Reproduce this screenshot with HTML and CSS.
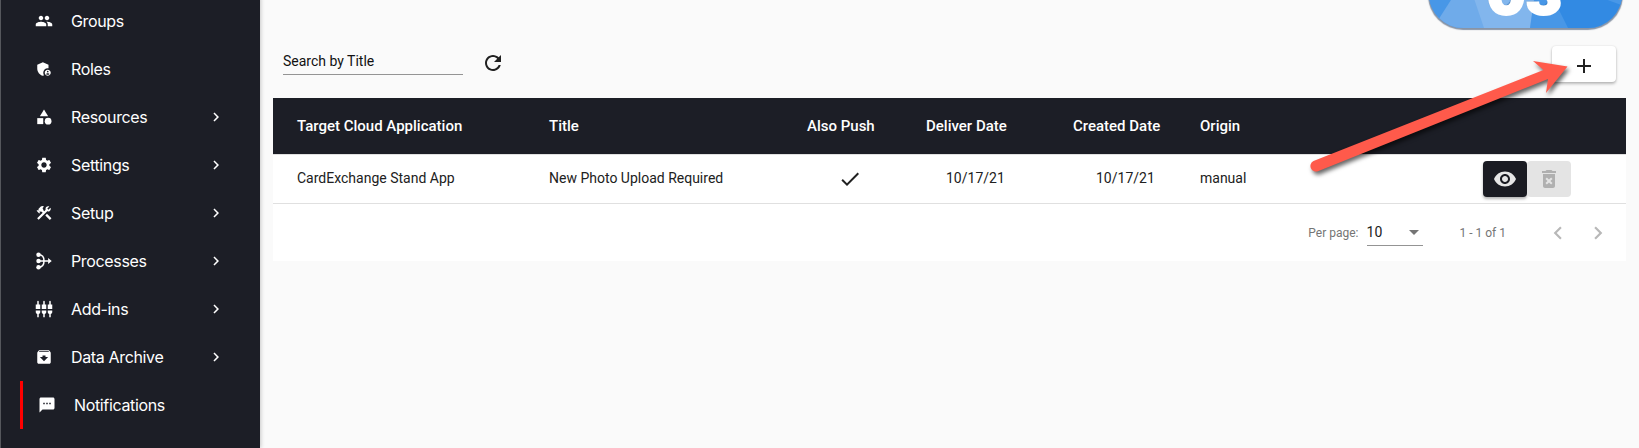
FILE: index.html
```
<!DOCTYPE html>
<html lang="en">

<head>
    <meta charset="UTF-8">
    <meta name="viewport" content="width=device-width, initial-scale=1.0">
    <title>Notifications</title>
    <link rel="stylesheet" href="styles.css">
</head>

<body>
    <div class="app">
        <nav class="sidebar">
            <a class="item">
                <svg class="icon" viewBox="0 0 24 24"><path d="M16 11c1.66 0 2.99-1.34 2.99-3S17.66 5 16 5c-1.66 0-3 1.34-3 3s1.34 3 3 3zm-8 0c1.66 0 2.99-1.34 2.99-3S9.66 5 8 5C6.34 5 5 6.34 5 8s1.34 3 3 3zm0 2c-2.33 0-7 1.17-7 3.5V19h14v-2.5c0-2.33-4.67-3.5-7-3.5zm8 0c-.29 0-.62.02-.97.05 1.16.84 1.97 1.97 1.97 3.45V19h6v-2.5c0-2.33-4.67-3.5-7-3.5z"/></svg>
                <span class="label">Groups</span>
            </a>
            <a class="item">
                <svg class="icon" viewBox="0 0 24 24"><path d="M17 11c.34 0 .67.04 1 .09V6.27L10.5 3 3 6.27v4.91c0 4.54 3.2 8.79 7.5 9.82.55-.13 1.08-.32 1.6-.55-.69-.98-1.1-2.17-1.1-3.45 0-3.31 2.69-6 6-6z"/><path d="M17 13c-2.21 0-4 1.79-4 4s1.79 4 4 4 4-1.79 4-4-1.79-4-4-4zm0 1.38c.62 0 1.12.51 1.12 1.12s-.51 1.12-1.12 1.12-1.12-.51-1.12-1.12.5-1.12 1.12-1.12zm0 5.37c-.93 0-1.74-.46-2.24-1.17.05-.72 1.51-1.08 2.24-1.08s2.19.36 2.24 1.08c-.5.71-1.31 1.17-2.24 1.17z"/></svg>
                <span class="label">Roles</span>
            </a>
            <a class="item">
                <svg class="icon" viewBox="0 0 24 24"><path d="M12 2l-5.5 9h11z"/><circle cx="17.5" cy="17.5" r="4.5"/><path d="M3 13.5h8v8H3z"/></svg>
                <span class="label">Resources</span>
                <svg class="icon" viewBox="0 0 24 24"><path d="M10 6L8.59 7.41 13.17 12l-4.58 4.59L10 18l6-6z"/></svg>
            </a>
            <a class="item">
                <svg class="icon" viewBox="0 0 24 24"><path d="M19.14 12.94c.04-.3.06-.61.06-.94 0-.32-.02-.64-.07-.94l2.03-1.58c.18-.14.23-.41.12-.61l-1.92-3.32c-.12-.22-.37-.29-.59-.22l-2.39.96c-.5-.38-1.03-.7-1.62-.94l-.36-2.54c-.04-.24-.24-.41-.48-.41h-3.84c-.24 0-.43.17-.47.41l-.36 2.54c-.59.24-1.13.57-1.62.94l-2.39-.96c-.22-.08-.47 0-.59.22L2.74 8.87c-.12.21-.08.47.12.61l2.03 1.58c-.05.3-.09.63-.09.94s.02.64.07.94l-2.03 1.58c-.18.14-.23.41-.12.61l1.92 3.32c.12.22.37.29.59.22l2.39-.96c.5.38 1.03.7 1.62.94l.36 2.54c.05.24.24.41.48.41h3.84c.24 0 .44-.17.47-.41l.36-2.54c.59-.24 1.13-.56 1.62-.94l2.39.96c.22.08.47 0 .59-.22l1.92-3.32c.12-.22.07-.47-.12-.61l-2.01-1.58zM12 15.6c-1.98 0-3.6-1.62-3.6-3.6s1.62-3.6 3.6-3.6 3.6 1.62 3.6 3.6-1.62 3.6-3.6 3.6z"/></svg>
                <span class="label">Settings</span>
                <svg class="icon" viewBox="0 0 24 24"><path d="M10 6L8.59 7.41 13.17 12l-4.58 4.59L10 18l6-6z"/></svg>
            </a>
            <a class="item">
                <svg class="icon" viewBox="0 0 24 24"><rect height="8.48" transform="matrix(0.7071 -0.7071 0.7071 0.7071 -6.8717 17.6255)" width="3" x="16.34" y="12.87"/><path d="M17.5,10c1.93,0,3.5-1.57,3.5-3.5c0-0.58-0.16-1.12-0.41-1.6l-2.7,2.7L16.4,6.11l2.7-2.7C18.62,3.16,18.08,3,17.5,3 C15.57,3,14,4.57,14,6.5c0,0.41,0.08,0.8,0.21,1.16l-1.85,1.85l-1.78-1.78l0.71-0.71L9.88,5.61L12,3.49 c-1.17-1.17-3.07-1.17-4.24,0L4.22,7.03l1.41,1.41H2.81L2.1,9.15l3.54,3.54l0.71-0.71V9.15l1.41,1.41l0.71-0.71l1.78,1.78 l-7.41,7.41l2.12,2.12L16.34,9.79C16.7,9.92,17.09,10,17.5,10z"/></svg>
                <span class="label">Setup</span>
                <svg class="icon" viewBox="0 0 24 24"><path d="M10 6L8.59 7.41 13.17 12l-4.58 4.59L10 18l6-6z"/></svg>
            </a>
            <a class="item">
                <svg class="icon" viewBox="0 0 24 24"><circle cx="4.7" cy="3.8" r="3"/><circle cx="4.7" cy="12" r="3"/><circle cx="4.7" cy="20.2" r="3"/><path d="M17.5 8l4.8 4-4.8 4z"/><path class="line" d="M5 12h13M5 3.8c4.5 0 7 3.2 7 8.2s-2.5 8.2-7 8.2"/></svg>
                <span class="label">Processes</span>
                <svg class="icon" viewBox="0 0 24 24"><path d="M10 6L8.59 7.41 13.17 12l-4.58 4.59L10 18l6-6z"/></svg>
            </a>
            <a class="item">
                <svg class="icon" viewBox="0 0 24 24"><path d="M5 2c0-.55-.45-1-1-1s-1 .45-1 1v4H1v6h6V6H5V2zm4 14c0 1.3.84 2.4 2 2.82V23h2v-4.18c1.16-.41 2-1.51 2-2.82v-2H9v2zm-8 0c0 1.3.84 2.4 2 2.82V23h2v-4.18C6.16 18.4 7 17.3 7 16v-2H1v2zM21 6V2c0-.55-.45-1-1-1s-1 .45-1 1v4h-2v6h6V6h-2zm-8-4c0-.55-.45-1-1-1s-1 .45-1 1v4H9v6h6V6h-2V2zm4 14c0 1.3.84 2.4 2 2.82V23h2v-4.18c1.16-.41 2-1.51 2-2.82v-2h-6v2z"/></svg>
                <span class="label">Add-ins</span>
                <svg class="icon" viewBox="0 0 24 24"><path d="M10 6L8.59 7.41 13.17 12l-4.58 4.59L10 18l6-6z"/></svg>
            </a>
            <a class="item">
                <svg class="icon" viewBox="0 0 24 24"><path d="M20.54 5.23l-1.39-1.68C18.88 3.21 18.47 3 18 3H6c-.47 0-.88.21-1.16.55L3.46 5.23C3.17 5.57 3 6.02 3 6.5V19c0 1.1.9 2 2 2h14c1.1 0 2-.9 2-2V6.5c0-.48-.17-.93-.46-1.27zM12 17.5L6.5 12H10v-2h4v2h3.5L12 17.5zM5.12 5l.81-1h12l.94 1H5.12z"/></svg>
                <span class="label">Data Archive</span>
                <svg class="icon" viewBox="0 0 24 24"><path d="M10 6L8.59 7.41 13.17 12l-4.58 4.59L10 18l6-6z"/></svg>
            </a>
            <a class="item active">
                <svg class="icon" viewBox="0 0 24 24"><path d="M20 2H4c-1.1 0-1.99.9-1.99 2L2 22l4-4h14c1.1 0 2-.9 2-2V4c0-1.1-.9-2-2-2zM9 11H7V9h2v2zm4 0h-2V9h2v2zm4 0h-2V9h2v2z"/></svg>
                <span class="label">Notifications</span>
            </a>
        </nav>

        <main class="content">
            <div class="toolbar">
                <div class="search">Search by Title</div>
                <svg class="icon refresh" viewBox="0 0 24 24"><path d="M17.65 6.35C16.2 4.9 14.21 4 12 4c-4.42 0-7.99 3.58-7.99 8s3.57 8 7.99 8c3.73 0 6.84-2.55 7.73-6h-2.08c-.82 2.33-3.04 4-5.65 4-3.31 0-6-2.69-6-6s2.69-6 6-6c1.66 0 3.14.69 4.22 1.78L13 11h7V4l-2.35 2.35z"/></svg>
                <button class="add">
                    <svg class="icon" viewBox="0 0 24 24"><path d="M19 13h-6v6h-2v-6H5v-2h6V5h2v6h6v2z"/></svg>
                </button>
            </div>

            <div class="table">
                <div class="row head">
                    <div>Target Cloud Application</div>
                    <div>Title</div>
                    <div>Also Push</div>
                    <div>Deliver Date</div>
                    <div>Created Date</div>
                    <div>Origin</div>
                    <div></div>
                </div>
                <div class="row">
                    <div class="cell">CardExchange Stand App</div>
                    <div class="cell">New Photo Upload Required</div>
                    <div class="check"><svg class="icon" viewBox="0 0 24 24"><path d="M9 16.17L4.83 12l-1.42 1.41L9 19 21 7l-1.41-1.41z"/></svg></div>
                    <div class="cell deliver">10/17/21</div>
                    <div class="cell created">10/17/21</div>
                    <div class="cell">manual</div>
                    <div class="actions">
                        <button class="view"><svg class="icon" viewBox="0 0 24 24"><path d="M12 4.5C7 4.5 2.73 7.61 1 12c1.73 4.39 6 7.5 11 7.5s9.27-3.11 11-7.5c-1.73-4.39-6-7.5-11-7.5zM12 17c-2.76 0-5-2.24-5-5s2.24-5 5-5 5 2.24 5 5-2.24 5-5 5zm0-8c-1.66 0-3 1.34-3 3s1.34 3 3 3 3-1.34 3-3-1.34-3-3-3z"/></svg></button>
                        <button class="delete" disabled><svg class="icon" viewBox="0 0 24 24"><path d="M6 19c0 1.1.9 2 2 2h8c1.1 0 2-.9 2-2V7H6v12zm2.46-7.12l1.41-1.41L12 12.59l2.12-2.12 1.41 1.41L13.41 14l2.12 2.12-1.41 1.41L12 15.41l-2.12 2.12-1.41-1.41L10.59 14l-2.13-2.12zM15.5 4l-1-1h-5l-1 1H5v2h14V4z"/></svg></button>
                    </div>
                </div>
                <div class="pager">
                    <span>Per page:</span>
                    <div class="select">10 <svg class="icon" viewBox="0 0 24 24"><path d="M7 10l5 5 5-5z"/></svg></div>
                    <span class="range">1 - 1 of 1</span>
                    <svg class="icon prev" viewBox="0 0 24 24"><path d="M15.41 7.41L14 6l-6 6 6 6 1.41-1.41L10.83 12z"/></svg>
                    <svg class="icon next" viewBox="0 0 24 24"><path d="M10 6L8.59 7.41 13.17 12l-4.58 4.59L10 18l6-6z"/></svg>
                </div>
            </div>
        </main>
    </div>

    <!-- badge hanging over the top edge -->
    <div class="badge">
        <svg class="facets" viewBox="0 0 195 68">
            <path class="light" d="M0 68L45 0h95l-12 68z"/>
            <path class="lighter" d="M55 68L32 0h78l-9 68z"/>
            <path class="mid" d="M0 0h45v4L4 68H0z"/>
            <path class="mid" d="M101 68l10-68h30v68z"/>
            <path class="dark" d="M139 68L105 0h90v68z"/>
            <path class="mid" d="M173 38l22 8V20z"/>
        </svg>
        <span class="number">03</span>
    </div>

    <svg class="arrow" viewBox="0 0 270 130">
        <path d="M8.5 111L238.5 20 228 11l34.5 5.5L241 43l2-14L13.5 121a5.4 5.4 0 0 1-5-10z"/>
    </svg>
</body>

</html>
```
FILE: styles.css
```
body {
    margin: 0;
    height: 448px;
    overflow: hidden;
    position: relative;
    background: #fafafa;
    font-family: Roboto, "Liberation Sans", sans-serif;
    font-size: 14px;
    color: #212121;
}

.app {
    display: flex;
    height: 448px;
}

.icon {
    width: 18px;
    height: 18px;
    fill: currentColor;
    flex: none;
}

button {
    border: none;
    padding: 0;
    display: flex;
    align-items: center;
    justify-content: center;
}

.sidebar {
    box-sizing: border-box;
    width: 260px;
    flex: none;
    margin-top: -3px;
    border-left: 1px solid #55575c;
    padding-left: 19px;
    background: #1c1e26;
    color: #fff;
    box-shadow: 1px 0 4px rgba(0, 0, 0, 0.2);
    font-family: Inter, sans-serif;
    font-size: 16px;
}

.item {
    display: flex;
    align-items: center;
    height: 48px;
    gap: 18px;
    padding-left: 15px;
    padding-right: 35px;
}

.item.active {
    border-left: 3px solid #f00;
}

.label {
    flex: 1;
    letter-spacing: -0.35px;
}

.line {
    fill: none;
    stroke: currentColor;
    stroke-width: 2;
}

.content {
    flex: 1;
    padding: 46px 13px 0;
}

.toolbar {
    display: flex;
    height: 52px;
    padding: 0 10px;
}

.search {
    width: 180px;
    height: 28px;
    line-height: 31px;
    border-bottom: 1px solid #949494;
    color: #111;
}

.refresh {
    width: 24px;
    height: 24px;
    margin: 5px 0 0 18px;
}

.add {
    width: 64px;
    height: 36px;
    margin-left: auto;
    border-radius: 4px;
    background: #fff;
    color: #212121;
    box-shadow: 0 2px 3px rgba(0, 0, 0, 0.25), 0 0 2px rgba(0, 0, 0, 0.12);
}

.add .icon {
    width: 24px;
    height: 24px;
    margin-top: 3px;
}

.table {
    background: #fff;
}

.row {
    display: grid;
    grid-template-columns: 252px 258px 119px 147px 127px 100px 1fr;
    align-items: center;
    height: 48px;
    padding-left: 24px;
    border-bottom: 1px solid #e0e0e0;
}

.head {
    height: 56px;
    background: #1c1e26;
    color: #fff;
    font-size: 15px;
    font-weight: 500;
}

.cell {
    padding-bottom: 2px;
}

.check {
    padding-left: 31px;
}

.check .icon {
    width: 24px;
    height: 24px;
    display: block;
}

.deliver {
    padding-left: 20px;
}

.created {
    padding-left: 23px;
}

.actions {
    display: flex;
    justify-content: flex-end;
    padding-right: 55px;
}

.actions button {
    width: 44px;
    height: 36px;
    border-radius: 4px;
}

.actions .icon {
    width: 24px;
    height: 24px;
}

.view {
    background: #1a1b22;
    color: #e6e6e6;
    box-shadow: 0 2px 3px rgba(0, 0, 0, 0.3);
}

.delete {
    background: #e4e4e4;
    color: #b0b0b0;
}

.pager {
    display: flex;
    align-items: center;
    justify-content: flex-end;
    height: 57px;
    padding-right: 15px;
    font-size: 12px;
    color: #757575;
}

.select {
    display: flex;
    align-items: center;
    justify-content: space-between;
    width: 56px;
    height: 26px;
    margin: 0 37px 0 8px;
    border-bottom: 1px solid #949494;
    font-size: 14px;
    color: #212121;
}

.select .icon {
    width: 24px;
    height: 24px;
    margin-right: -3px;
    color: #757575;
}

.range {
    margin-right: 39px;
}

.prev,
.next {
    width: 26px;
    height: 26px;
    color: #b8b8b8;
}

.next {
    margin-left: 14px;
}

.badge {
    position: absolute;
    left: 1429px;
    top: -40px;
    width: 193px;
    height: 68px;
    border-radius: 34px;
    overflow: hidden;
    background: #4a98e8;
    box-shadow: 0 1px 1px 1px rgba(60, 80, 110, 0.6);
}

.facets {
    display: block;
    width: 195px;
    height: 68px;
}

.light {
    fill: #6fabea;
}

.lighter {
    fill: #82b6ed;
}

.mid {
    fill: #4897e7;
}

.dark {
    fill: #328ae3;
}

.number {
    position: absolute;
    left: 58px;
    bottom: 6px;
    font-family: Inter, sans-serif;
    font-size: 54px;
    font-weight: 900;
    line-height: 54px;
    color: #fff;
    -webkit-text-stroke: 2px #fff;
    text-shadow: -1px -1px 1px #1d62a8;
}

.arrow {
    position: absolute;
    left: 1305px;
    top: 50px;
    width: 270px;
    height: 130px;
    fill: #ff5a4b;
    filter: drop-shadow(2px 3px 2px rgba(0, 0, 0, 0.6));
}
```
